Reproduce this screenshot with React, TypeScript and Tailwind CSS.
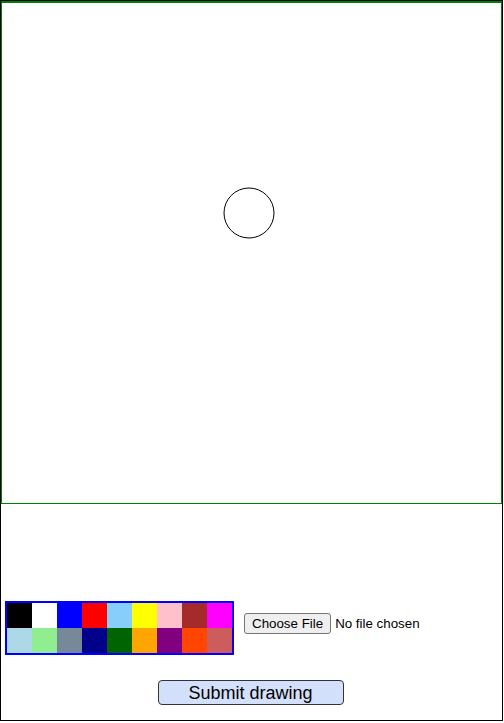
const colors = [
  "#000000", "#ffffff", "#0000ff", "#ff0000", "#87cefa", "#ffff00", "#ffc0cb", "#a52a2a", "#ff00ff",
  "#add8e6", "#90ee90", "#778899", "#00008b", "#006400", "#ffa500", "#800080", "#ff4500", "#cd5c5c",
];

export default function App() {
  return (
    <div className="w-[503px] h-[721px] border border-black bg-white font-['Liberation_Sans',Arial,sans-serif] text-black">
      {/* drawing surface */}
      <div className="w-[501px] h-[503px] border border-t-2 border-[#008000]">
        <svg width="499" height="500" className="block">
          <circle cx="247" cy="210" r="25" fill="none" stroke="#000" strokeWidth="1" />
        </svg>
      </div>

      <div className="flex flex-col pt-[97px] pl-[4px] pr-[6px]">
        <div className="flex items-center">
          <div className="grid grid-cols-9 border-2 border-[#0000ff] w-[229px]">
            {colors.map((c) => (
              <div key={c} className="w-[25px] h-[25px]" style={{ backgroundColor: c }} />
            ))}
          </div>
          <div className="flex items-center ml-[10px] mb-[9px] text-[13.33px]">
            <button
              type="button"
              className="h-[21px] px-[7px] border border-[#767676] rounded-[3px] bg-[#efefef] leading-none"
            >
              Choose File
            </button>
            <span className="ml-[4px]">No file chosen</span>
          </div>
        </div>
        <div className="flex justify-center mt-[25px]">
          <button
            type="button"
            className="w-[186px] h-[25px] border border-[#333] rounded-[4px] bg-[#d3e0fb] text-[18px] leading-none"
          >
            Submit drawing
          </button>
        </div>
      </div>
    </div>
  );
}
